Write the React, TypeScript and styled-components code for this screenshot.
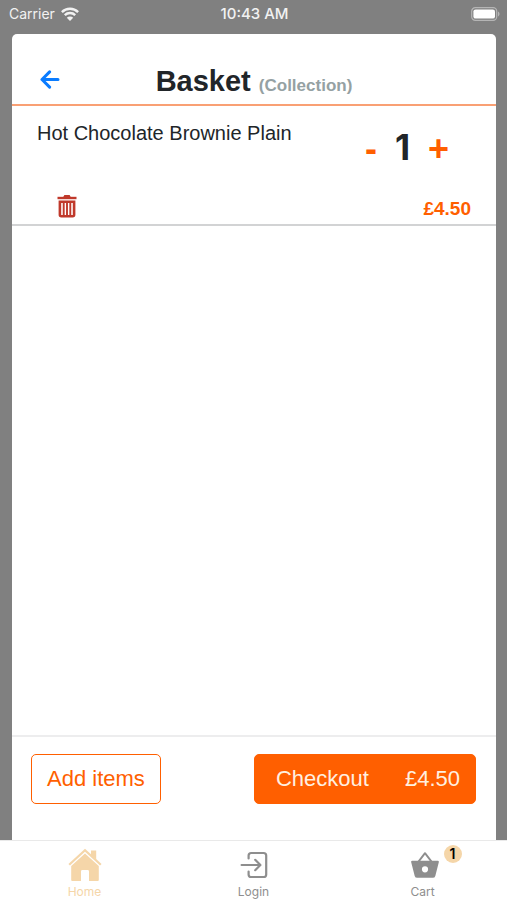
import React, { useState } from "react";
import styled, { createGlobalStyle } from "styled-components";

const ORANGE = "#ff5f00";
const HELVETICA = '"Liberation Sans", Helvetica, Arial, sans-serif';
const SYSTEM = 'Inter, "Liberation Sans", sans-serif';

const GlobalStyle = createGlobalStyle`
  *, *::before, *::after { box-sizing: border-box; }
  body { margin: 0; background: #808080; font-family: ${HELVETICA}; color: #212529; }
  button { font: inherit; color: inherit; background: none; border: 0; padding: 0; cursor: pointer; }
  svg { display: block; }
`;

const Screen = styled.div`
  min-height: 100vh;
  display: flex;
  flex-direction: column;
  background: #808080;
`;

const StatusBar = styled.div`
  display: grid;
  grid-template-columns: 1fr auto 1fr;
  align-items: center;
  height: 34px;
  padding: 0 7px 6px 9px;
  color: #f2f2f2;
  font: 400 14px/20px ${SYSTEM};
`;

const Carrier = styled.div`
  display: flex;
  align-items: center;
  gap: 6px;
`;

const Clock = styled.time`
  font-size: 15px;
  font-weight: 500;
`;

const Battery = styled.div`
  justify-self: end;
`;

const Sheet = styled.main`
  flex: 1;
  display: flex;
  flex-direction: column;
  margin: 0 11px 0 12px;
  background: #fff;
  border-radius: 5px 5px 0 0;
`;

const Header = styled.header`
  display: grid;
  grid-template-columns: 28px 1fr 28px;
  align-items: center;
  height: 72px;
  padding: 20px 24px 0;
  border-bottom: 2px solid #f9a074;
`;

const BackButton = styled.button`
  justify-self: start;
  color: #0a7cff;
  padding: 0 4px;
`;

const Title = styled.h1`
  margin: 0;
  padding-top: 8px;
  text-align: center;
  font-size: 29px;
  line-height: 32px;
  font-weight: 700;
`;

const Mode = styled.small`
  font-size: 17px;
  color: #95a1a3;
`;

const Items = styled.ul`
  flex: 1;
  margin: 0;
  padding: 0;
  list-style: none;
`;

const Item = styled.li`
  display: flex;
  flex-direction: column;
  justify-content: space-between;
  height: 120px;
  padding: 15px 25px 4px;
  border-bottom: 2px solid #d2d3d4;
`;

const ItemRow = styled.div`
  display: flex;
  justify-content: space-between;
  align-items: flex-start;
`;

const BottomRow = styled(ItemRow)`
  align-items: flex-end;
`;

const ItemName = styled.span`
  font-size: 20px;
  line-height: 24px;
`;

const Stepper = styled.div`
  display: flex;
  align-items: center;
  gap: 18px;
  padding: 4px 22px 0 0;
  line-height: 40px;
`;

const StepButton = styled.button`
  padding-top: 4px;
  color: ${ORANGE};
  font-size: 36px;
  font-weight: 700;
`;

const Quantity = styled.output`
  font: 700 35px/40px ${SYSTEM};
`;

const RemoveButton = styled.button`
  margin-left: 20px;
  padding-bottom: 2px;
  color: #c0392b;
`;

const Price = styled.span`
  font-size: 19px;
  line-height: 22px;
  font-weight: 700;
  color: ${ORANGE};
`;

const Actions = styled.footer`
  display: flex;
  justify-content: space-between;
  align-items: flex-start;
  height: 105px;
  padding: 17px 20px 0 19px;
  border-top: 2px solid #ededee;
`;

const ActionButton = styled.button<{ $filled?: boolean }>`
  display: flex;
  align-items: center;
  justify-content: space-between;
  gap: 36px;
  height: 50px;
  padding: 0 ${(p) => (p.$filled ? "15px 0 21px" : "15px")};
  border: 1px solid ${ORANGE};
  border-radius: 5px;
  font-size: 22px;
  color: ${(p) => (p.$filled ? "#fff0e0" : ORANGE)};
  background: ${(p) => (p.$filled ? ORANGE : "#fff")};
`;

const TabBar = styled.nav`
  display: grid;
  grid-template-columns: repeat(3, 1fr);
  height: 60px;
  border-top: 1px solid #e9e9e9;
  background: #fff;
`;

const Tab = styled.a<{ $active?: boolean }>`
  display: flex;
  flex-direction: column;
  align-items: center;
  gap: 2px;
  padding-top: 7px;
  color: ${(p) => (p.$active ? "#f5d6a9" : "#8e8e8e")};
  font: 400 12px/16px ${SYSTEM};
  text-decoration: none;
`;

const TabIcon = styled.span`
  position: relative;
  display: flex;
  align-items: center;
  height: 34px;
`;

const Badge = styled.span`
  position: absolute;
  top: -3px;
  left: 37px;
  width: 18px;
  height: 18px;
  border-radius: 50%;
  background: #f5d6a9;
  color: #000;
  text-align: center;
  font: 600 14px/18px ${SYSTEM};
`;

const WifiIcon = () => (
  <svg width="18" height="14" viewBox="0 0 18 14" fill="none" stroke="currentColor" strokeWidth="2.4" aria-hidden="true">
    <path d="M0.9 5.1a11.5 11.5 0 0 1 16.2 0" />
    <path d="M3.8 8.1a7.4 7.4 0 0 1 10.4 0" />
    <path d="M9 14 5.8 10.7a4.6 4.6 0 0 1 6.4 0z" fill="currentColor" stroke="none" />
  </svg>
);

const BatteryIcon = () => (
  <svg width="29" height="14" viewBox="0 0 29 14" aria-label="Battery full">
    <rect x="0.7" y="0.7" width="25" height="12.6" rx="3.6" fill="none" stroke="#b5b5b5" strokeWidth="1.2" />
    <rect x="2.4" y="2.4" width="21.6" height="9.2" rx="2.2" fill="#fff" />
    <path d="M27 4.6c2 .8 2 4 0 4.8z" fill="#b5b5b5" />
  </svg>
);

const ArrowIcon = () => (
  <svg width="20" height="20" viewBox="0 0 20 20" fill="none" stroke="currentColor" strokeWidth="3" strokeLinecap="round" strokeLinejoin="round" aria-hidden="true">
    <path d="M18 10.5H2M9.6 2.9 2 10.5l7.6 7.6" />
  </svg>
);

const TrashIcon = () => (
  <svg width="20" height="24" viewBox="0 0 20 24" fill="none" stroke="currentColor" aria-hidden="true">
    <path d="M0.5 4h19" strokeWidth="2.4" />
    <path d="M6 3.4 7.4 1h5.2L14 3.4z" fill="currentColor" stroke="none" />
    <path d="M2.9 7.7h14.2v13.1a1.4 1.4 0 0 1-1.4 1.4H4.3a1.4 1.4 0 0 1-1.4-1.4z" strokeWidth="2.6" />
    <path d="M6.7 8v14M10 8v14M13.3 8v14" strokeWidth="1.9" />
  </svg>
);

const HomeIcon = () => (
  <svg width="34" height="34" viewBox="0 0 34 34" aria-hidden="true">
    <path d="M1.2 16.8 17 2.2l15.8 14.6" fill="none" stroke="currentColor" strokeWidth="2.2" />
    <path d="M23 2.4h5.2v9.4L23 7z" fill="currentColor" />
    <path d="M17 5.4 30.8 18v14a1 1 0 0 1-1 1H21v-9.6a1.4 1.4 0 0 0-1.4-1.4h-5.2a1.4 1.4 0 0 0-1.4 1.4V33H4.2a1 1 0 0 1-1-1V18z" fill="currentColor" />
  </svg>
);

const LoginIcon = () => (
  <svg width="28" height="28" viewBox="0 0 28 28" fill="none" stroke="currentColor" strokeWidth="2.2" strokeLinecap="round" strokeLinejoin="round" aria-hidden="true">
    <path d="M8.6 7.4V4.6a2.6 2.6 0 0 1 2.6-2.6h12.4a2.6 2.6 0 0 1 2.6 2.6v18.8a2.6 2.6 0 0 1-2.6 2.6H11.2a2.6 2.6 0 0 1-2.6-2.6v-2.8" />
    <path d="M1.6 14h18.2M15.2 8.8l5.2 5.2-5.2 5.2" />
  </svg>
);

const BasketIcon = () => (
  <svg width="32" height="28" viewBox="-4 0 32 28" aria-hidden="true">
    <path d="M7.5 10.6 14 2.2l6.5 8.4" fill="none" stroke="currentColor" strokeWidth="1.9" strokeLinejoin="round" />
    <path fillRule="evenodd" d="M1.4 9.8h25.2a1.2 1.2 0 0 1 1.2 1.5l-3.5 13.6a2.6 2.6 0 0 1-2.5 1.9H6.2a2.6 2.6 0 0 1-2.5-1.9L.2 11.3a1.2 1.2 0 0 1 1.2-1.5zM14 15.2a3.1 3.1 0 1 0 0 6.2 3.1 3.1 0 0 0 0-6.2z" fill="currentColor" />
  </svg>
);

const UNIT_PRICE = 4.5;

export default function App() {
  const [quantity, setQuantity] = useState(1);
  const total = `£${(UNIT_PRICE * quantity).toFixed(2)}`;

  return (
    <Screen>
      <GlobalStyle />
      <StatusBar>
        <Carrier>
          Carrier <WifiIcon />
        </Carrier>
        <Clock>10:43 AM</Clock>
        <Battery>
          <BatteryIcon />
        </Battery>
      </StatusBar>

      <Sheet>
        <Header>
          <BackButton aria-label="Back">
            <ArrowIcon />
          </BackButton>
          <Title>
            Basket <Mode>(Collection)</Mode>
          </Title>
        </Header>

        <Items>
          {quantity > 0 && (
            <Item>
              <ItemRow>
                <ItemName>Hot Chocolate Brownie Plain</ItemName>
                <Stepper>
                  <StepButton aria-label="Decrease quantity" onClick={() => setQuantity(quantity - 1)}>
                    -
                  </StepButton>
                  <Quantity>{quantity}</Quantity>
                  <StepButton aria-label="Increase quantity" onClick={() => setQuantity(quantity + 1)}>
                    +
                  </StepButton>
                </Stepper>
              </ItemRow>
              <BottomRow>
                <RemoveButton aria-label="Remove item" onClick={() => setQuantity(0)}>
                  <TrashIcon />
                </RemoveButton>
                <Price>{total}</Price>
              </BottomRow>
            </Item>
          )}
        </Items>

        <Actions>
          <ActionButton>Add items</ActionButton>
          <ActionButton $filled>
            <span>Checkout</span>
            <span>{total}</span>
          </ActionButton>
        </Actions>
      </Sheet>

      <TabBar>
        <Tab href="#home" $active>
          <TabIcon>
            <HomeIcon />
          </TabIcon>
          Home
        </Tab>
        <Tab href="#login">
          <TabIcon>
            <LoginIcon />
          </TabIcon>
          Login
        </Tab>
        <Tab href="#cart">
          <TabIcon>
            <BasketIcon />
            {quantity > 0 && <Badge>{quantity}</Badge>}
          </TabIcon>
          Cart
        </Tab>
      </TabBar>
    </Screen>
  );
}
